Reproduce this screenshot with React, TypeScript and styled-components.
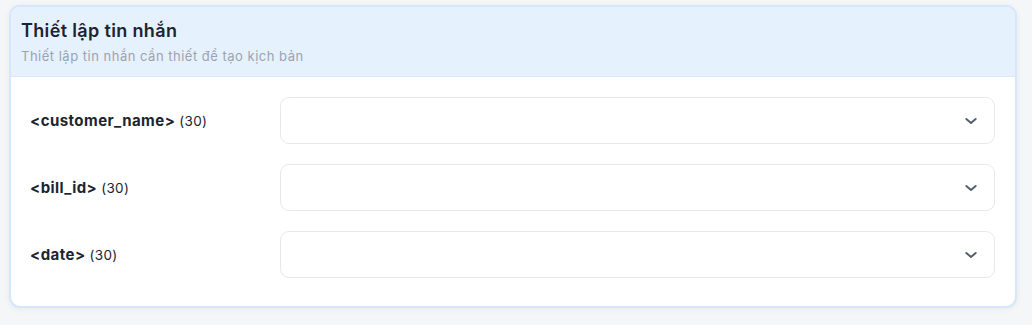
import React from "react";
import styled, { createGlobalStyle } from "styled-components";

const Global = createGlobalStyle`
  html, body { margin: 0; padding: 0; background: #f5f6f7; }
  body { font-family: "Inter", "Noto Sans", sans-serif; }
  * { box-sizing: border-box; }
`;

const Page = styled.div`
  padding: 5px 15px 16px 9px;
  width: 1032px;
  height: 325px;
`;

const Card = styled.section`
  border: 2px solid #d5e7fc;
  border-radius: 11px;
  background: #fff;
  overflow: hidden;
  box-shadow: 0 1px 6px rgba(0, 0, 0, 0.06);
`;

const Header = styled.header`
  background: #e6f1fe;
  padding: 11px 10px 10px;
  border-bottom: 1px solid #dde9f7;
`;

const Title = styled.h2`
  margin: 0;
  font-size: 18px;
  font-weight: 600;
  color: #1c2430;
  line-height: 26px;
  letter-spacing: 0.35px;
`;

const Subtitle = styled.p`
  margin: 2px 0 0;
  font-size: 13px;
  color: #9ca3af;
  line-height: 20px;
  letter-spacing: 0.5px;
`;

const Body = styled.div`
  display: flex;
  flex-direction: column;
  gap: 20px;
  padding: 20px 20px 28px 18px;
`;

const Row = styled.div`
  display: grid;
  grid-template-columns: 251px 1fr;
  align-items: center;
`;

const Label = styled.div`
  font-size: 15px;
  color: #1c2430;
  letter-spacing: 0.45px;
  padding-left: 1px;
`;

const Key = styled.span`
  font-weight: 650;
`;

const Count = styled.span`
  font-size: 13.5px;
  font-weight: 400;
  margin-left: 4px;
  letter-spacing: 0.3px;
`;

const Select = styled.button`
  height: 47px;
  border: 1px solid #e6e8ec;
  border-radius: 9px;
  background: #fff;
  display: flex;
  align-items: center;
  justify-content: flex-end;
  padding: 0 15px;
  color: #56606c;
  cursor: pointer;
`;

const Chevron = () => (
  <svg width="16" height="16" viewBox="0 0 24 24" fill="none" stroke="currentColor" strokeWidth="3" strokeLinecap="round" strokeLinejoin="round">
    <path d="M5 9l7 6 7-6" />
  </svg>
);

const fields = [
  { key: "<customer_name>", count: 30 },
  { key: "<bill_id>", count: 30 },
  { key: "<date>", count: 30 },
];

export default function App() {
  return (
    <>
      <Global />
      <Page>
        <Card>
          <Header>
            <Title>Thiết lập tin nhắn</Title>
            <Subtitle>Thiết lập tin nhắn cần thiết để tạo kịch bản</Subtitle>
          </Header>
          <Body>
            {fields.map((f) => (
              <Row key={f.key}>
                <Label>
                  <Key>{f.key}</Key>
                  <Count>({f.count})</Count>
                </Label>
                <Select type="button">
                  <Chevron />
                </Select>
              </Row>
            ))}
          </Body>
        </Card>
      </Page>
    </>
  );
}
